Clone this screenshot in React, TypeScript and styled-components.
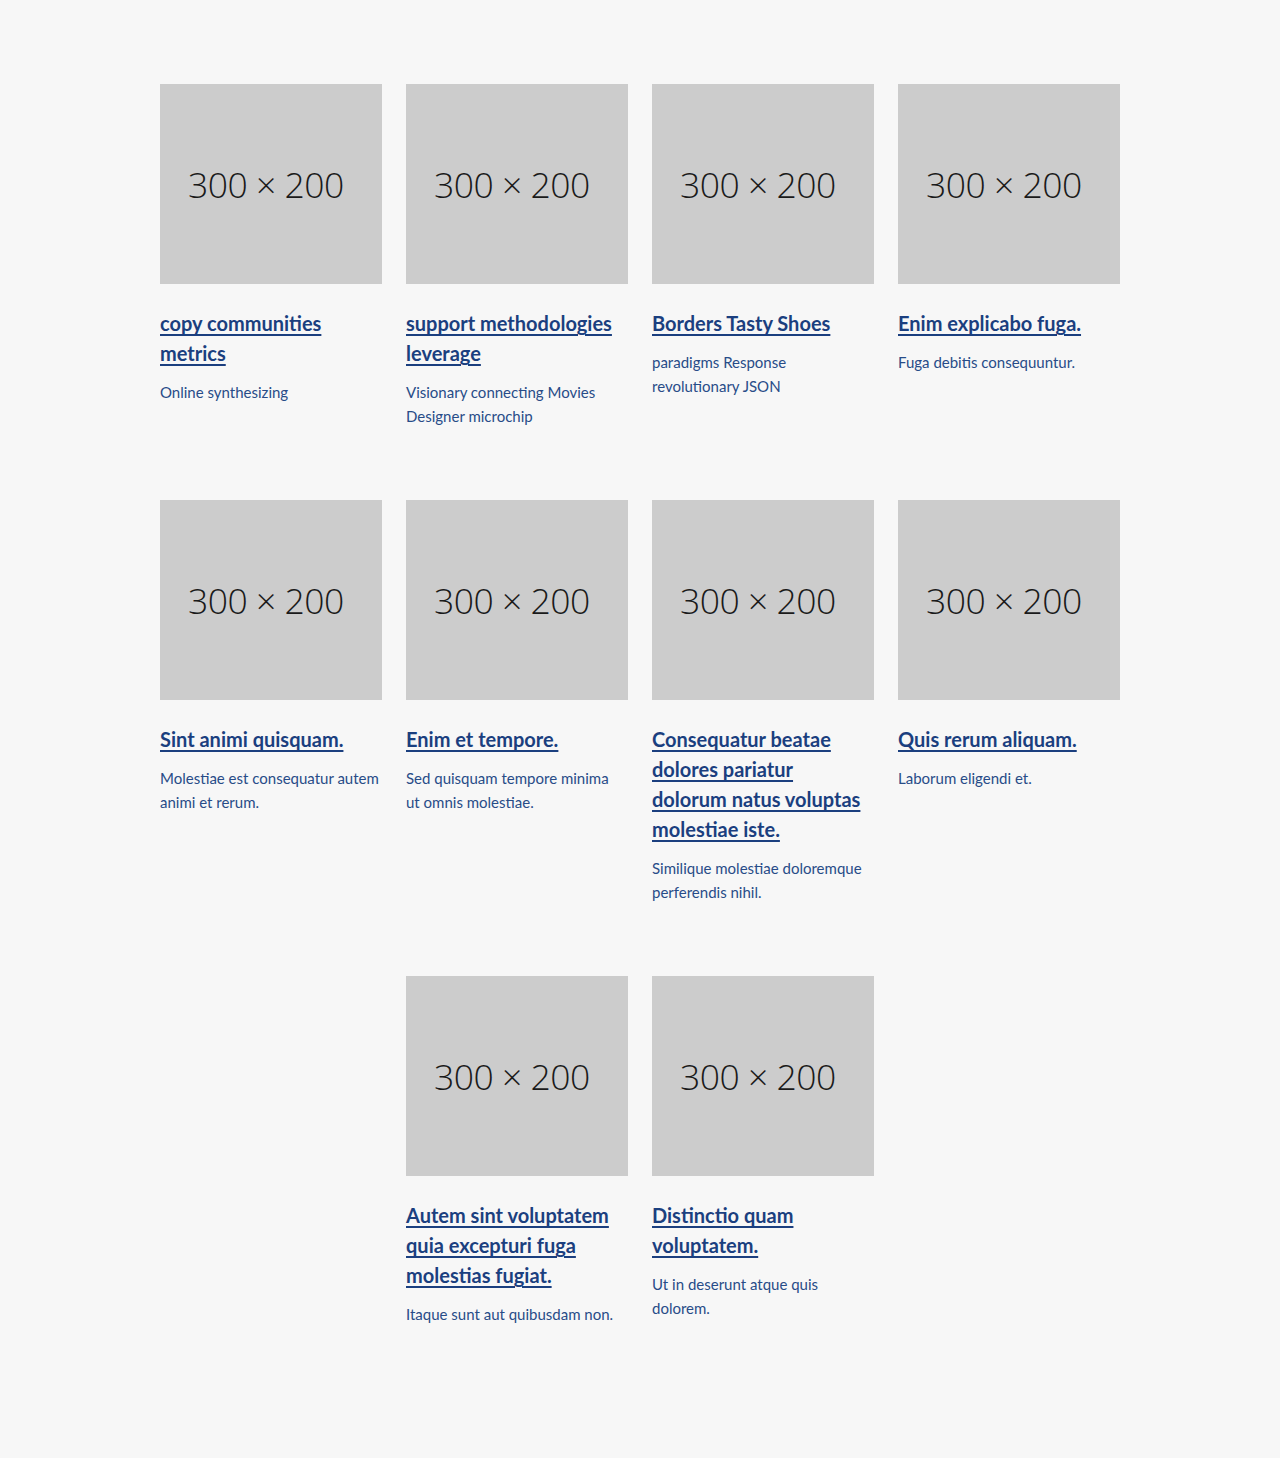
import React from 'react';
import styled, { createGlobalStyle } from 'styled-components';

const GlobalStyle = createGlobalStyle`
    * {
        box-sizing: border-box;
    }
    body {
        margin: 0;
        background: #f7f7f7;
        font-family: Lato, "Noto Sans", sans-serif;
    }
`;

const Page = styled.main`
    min-height: 1458px;
    padding: 84px 160px 60px;
`;

const Grid = styled.ul`
    display: flex;
    flex-wrap: wrap;
    justify-content: center;
    column-gap: 24px;
    margin: 0;
    padding: 0;
    list-style: none;
`;

const Card = styled.li`
    display: flex;
    flex-direction: column;
    width: 222px;
    margin-bottom: 72px;
`;

const Placeholder = styled.div`
    display: flex;
    align-items: center;
    justify-content: center;
    height: 200px;
    padding-right: 10px;
    background: #cccccc;
    color: #1a1a1a;
    font-family: "Open Sans", sans-serif;
    font-size: 35.5px;
    font-weight: 300;
    letter-spacing: -0.5px;
`;

const Title = styled.a`
    display: block;
    margin-top: 24px;
    padding-right: 4px;
    color: #1b3f7f;
    font-size: 20px;
    font-weight: 700;
    line-height: 30px;
    text-decoration: underline;
    text-decoration-thickness: 2px;
    text-underline-offset: 3px;
`;

const Description = styled.p`
    margin: 12px 0 0;
    padding-right: 3px;
    color: #284c88;
    font-size: 15px;
    line-height: 24px;
`;

interface Item {
    title: string;
    text: string;
}

const items: Item[] = [
    { title: 'copy communities metrics', text: 'Online synthesizing' },
    { title: 'support methodologies leverage', text: 'Visionary connecting Movies Designer microchip' },
    { title: 'Borders Tasty Shoes', text: 'paradigms Response revolutionary JSON' },
    { title: 'Enim explicabo fuga.', text: 'Fuga debitis consequuntur.' },
    { title: 'Sint animi quisquam.', text: 'Molestiae est consequatur autem animi et rerum.' },
    { title: 'Enim et tempore.', text: 'Sed quisquam tempore minima ut omnis molestiae.' },
    {
        title: 'Consequatur beatae dolores pariatur dolorum natus voluptas molestiae iste.',
        text: 'Similique molestiae doloremque perferendis nihil.',
    },
    { title: 'Quis rerum aliquam.', text: 'Laborum eligendi et.' },
    { title: 'Autem sint voluptatem quia excepturi fuga molestias fugiat.', text: 'Itaque sunt aut quibusdam non.' },
    { title: 'Distinctio quam voluptatem.', text: 'Ut in deserunt atque quis dolorem.' },
];

const App: React.FC = () => {
    return (
        <>
            <GlobalStyle />
            <Page>
                <Grid>
                    {items.map((item, i) => (
                        <Card key={i}>
                            <Placeholder>300 × 200</Placeholder>
                            <Title href="#">{item.title}</Title>
                            <Description>{item.text}</Description>
                        </Card>
                    ))}
                </Grid>
            </Page>
        </>
    );
};

export default App;
